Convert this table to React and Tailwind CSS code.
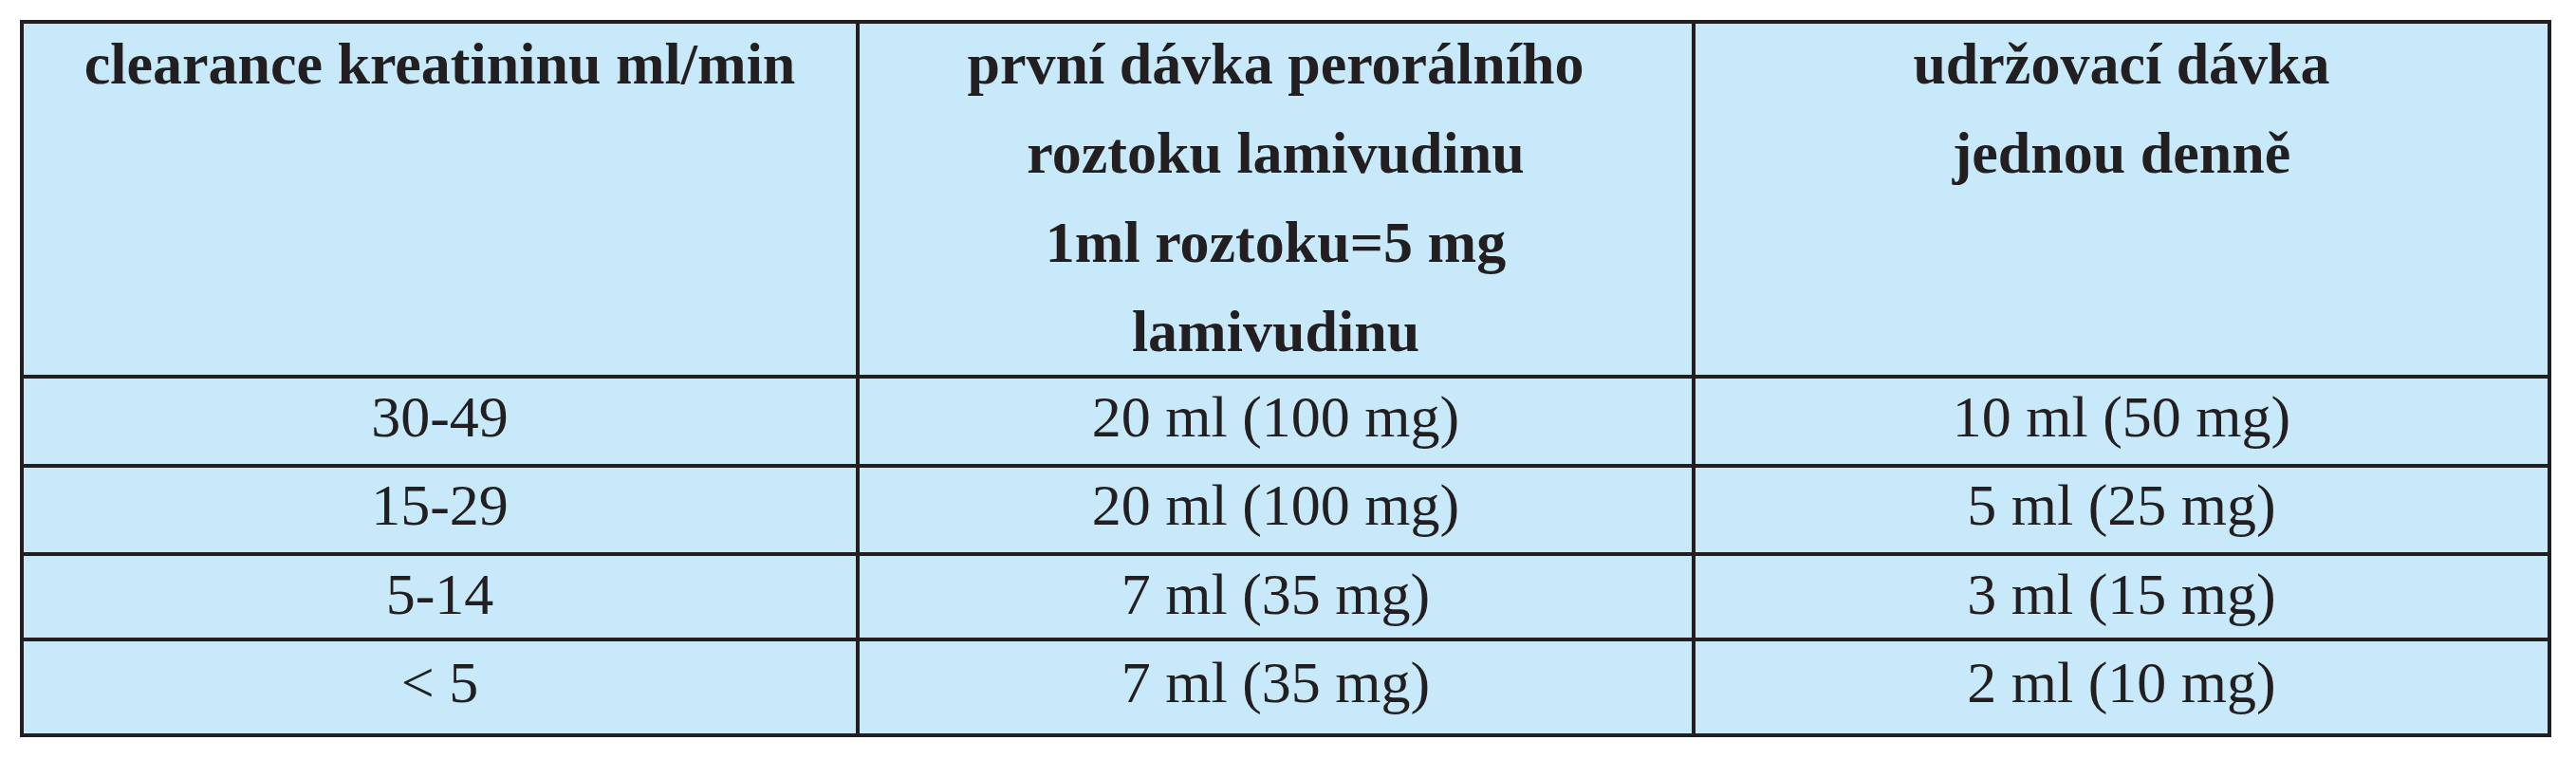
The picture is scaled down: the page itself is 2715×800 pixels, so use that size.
import { Fragment } from "react";

const rows = [
  { clearance: "30-49", first: "20 ml (100 mg)", keep: "10 ml (50 mg)", pad: "pt-[9px]" },
  { clearance: "15-29", first: "20 ml (100 mg)", keep: "5 ml (25 mg)", pad: "pt-[8px]" },
  { clearance: "5-14", first: "7 ml (35 mg)", keep: "3 ml (15 mg)", pad: "pt-[9px]" },
  { clearance: "< 5", first: "7 ml (35 mg)", keep: "2 ml (10 mg)", pad: "pt-[12px]" },
];

const HeadCell = ({ children }) => (
  <div className="bg-[#c7e9fa] text-center font-bold">
    <p className="-mt-[5px] leading-[94px] whitespace-nowrap">{children}</p>
  </div>
);

const App = () => {
  return (
    <div className="w-[2715px] h-[800px] bg-white pt-[21px] pl-[21px] font-['Liberation_Serif',serif] text-[62px] text-[#231f20]">
      <div className="w-[2668px] bg-[#231f20] p-[4px] grid grid-cols-[877px_877px_898px] grid-rows-[370px_90px_89px_86px_97px] gap-[4px]">
        <HeadCell>clearance kreatininu ml/min</HeadCell>
        <HeadCell>
          první dávka perorálního
          <br />
          roztoku lamivudinu
          <br />
          1ml roztoku=5 mg
          <br />
          lamivudinu
        </HeadCell>
        <HeadCell>
          udržovací dávka
          <br />
          jednou denně
        </HeadCell>

        {rows.map((r) => (
          <Fragment key={r.clearance}>
            <div className={`bg-[#c7e9fa] text-center leading-[62px] ${r.pad}`}>{r.clearance}</div>
            <div className={`bg-[#c7e9fa] text-center leading-[62px] ${r.pad}`}>{r.first}</div>
            <div className={`bg-[#c7e9fa] text-center leading-[62px] ${r.pad}`}>{r.keep}</div>
          </Fragment>
        ))}
      </div>
    </div>
  );
};

export default App;
